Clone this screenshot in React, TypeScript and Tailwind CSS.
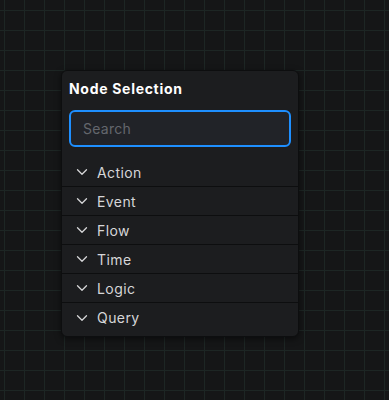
import { ChevronDown } from "lucide-react";

const groups = ["Action", "Event", "Flow", "Time", "Logic", "Query"];

export default function App() {
  return (
    <div
      className="relative h-[400px] w-[389px] overflow-hidden bg-[#151617]"
      style={{
        fontFamily: "Inter, 'Noto Sans', sans-serif",
        backgroundImage:
          "linear-gradient(to right, #1d2624 1px, transparent 1px), linear-gradient(to bottom, #1d2624 1px, transparent 1px)",
        backgroundSize: "20px 20px",
        backgroundPosition: "4px 10px",
      }}
    >
      <div className="absolute left-[61px] top-[70px] w-[238px] rounded-md border border-[#0d0e0f] bg-[#1c1d1f] pb-1 shadow-[0_2px_6px_rgba(0,0,0,0.5)]">
        <div className="px-[7px] pt-2">
          <h2 className="text-[14px] font-bold leading-5 tracking-[0.05em] text-white">
            Node Selection
          </h2>
          <input
            placeholder="Search"
            className="mt-[11px] h-[37px] w-full rounded-md border-2 border-[#1e8fff] bg-[#212328] px-3 text-[14px] tracking-[0.02em] text-white outline-none placeholder:text-[#64676d]"
          />
        </div>
        <ul className="mt-[11px] divide-y divide-[#0d0e0f]">
          {groups.map((g) => (
            <li key={g} className="flex h-[29px] items-center gap-[6px] pl-[11px] text-[14px] text-[#d6d6d8]">
              <ChevronDown size={18} strokeWidth={1.7} className="text-[#d6d6d8]" />
              <span className="tracking-[0.03em]">{g}</span>
            </li>
          ))}
        </ul>
      </div>
    </div>
  );
}
